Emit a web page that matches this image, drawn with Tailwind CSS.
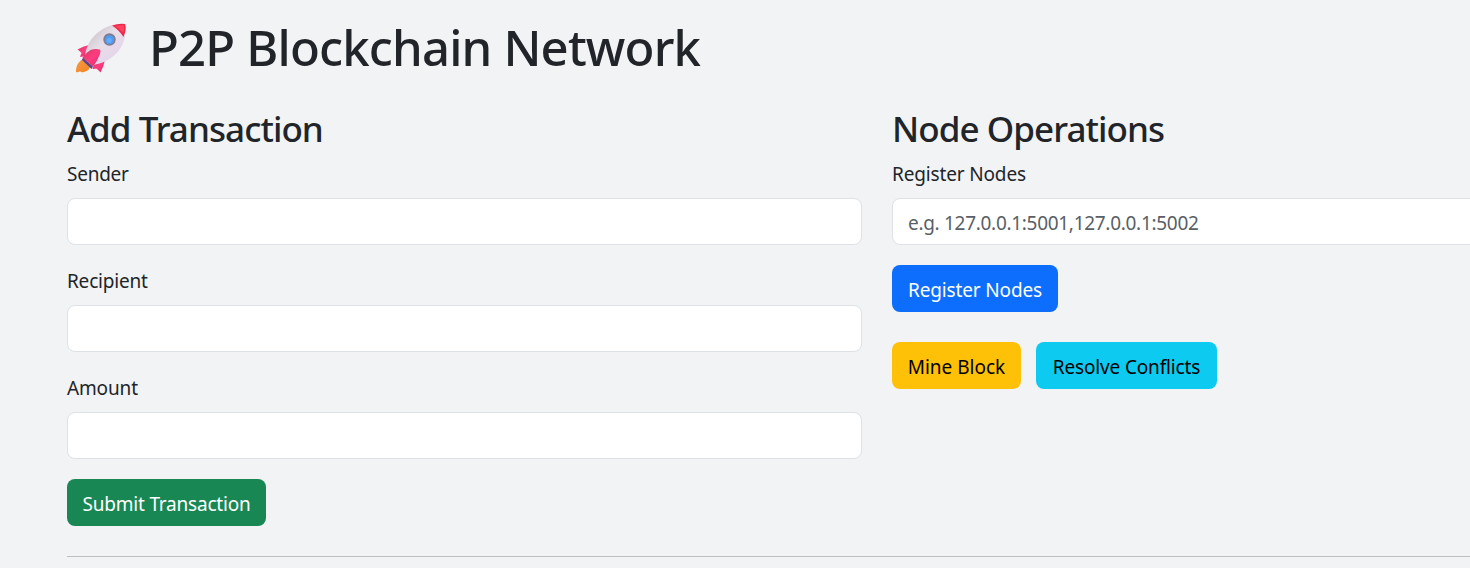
<!DOCTYPE html>
<html lang="en">
<head>
<meta charset="utf-8">
<title>P2P Blockchain Network</title>
<script src="https://cdn.jsdelivr.net/npm/@tailwindcss/browser@4"></script>
</head>
<body class="h-[568px] overflow-hidden bg-[#f1f3f5] font-['Noto_Sans',sans-serif] text-[19px] leading-[30px] tracking-[-0.15px] text-[#212529]">
<main class="ml-[67px] w-[1620px] pt-[18px]">
  <h1 class="flex h-[60px] items-center text-[49px] leading-[60px] font-medium tracking-[-0.82px]">
    <svg class="ml-2 mr-[21px] h-[51px] w-[53px] shrink-0" viewBox="0 0 53 51" aria-hidden="true">
      <defs>
        <linearGradient id="body" x1="0" y1="0" x2="1" y2="1"><stop offset="0.1" stop-color="#c9bfc7"/><stop offset=".45" stop-color="#e6dfe7"/><stop offset="1" stop-color="#e6cdef"/></linearGradient>
        <linearGradient id="fin" x1="0" y1="0" x2="1" y2="1"><stop offset="0" stop-color="#c93a62"/><stop offset=".5" stop-color="#ff3d80"/><stop offset="1" stop-color="#d92a6c"/></linearGradient>
        <linearGradient id="flame" x1="0" y1="0" x2="1" y2="1"><stop offset="0" stop-color="#f29a45"/><stop offset="1" stop-color="#f78423"/></linearGradient>
      </defs>
      <path d="M8 36C4 38 1 42 1 49Q3 50 5 48Q6 50 9 49C13 48 15 46 15 43Z" fill="url(#flame)"/>
      <path d="M14 22Q8 23 2.5 26.5Q5 28 6.5 30Q5.500 32 5 34L12 33Z" fill="url(#fin)"/>
      <path d="M30 36.500Q29 43 25.500 49.500Q23 46.500 21 45.500Q19 46 17.500 46L20 38Z" fill="url(#fin)"/>
      <path d="M8 34.500L18 43.500L16.500 46L7 37Z" fill="#584789"/>
      <path d="M10 33C11 20 21 7 37 2L50 13C48 27 36 39 18 42Z" fill="url(#body)"/>
      <path d="M37 2.500Q44 0 50 1Q52 6 48.500 14Q44 7 37 2.500Z" fill="#ed2849"/>
      <path d="M40 3Q46 2 49 2Q50 6 48 10Q45 6 40 3Z" fill="#ff4260"/>
      <path d="M7.500 34.500Q10.500 30 15.500 27Q20 25.500 25 26.500Q26 28 25 31Q22.500 38 18 43.500Z" fill="url(#fin)"/>
      <circle cx="34.5" cy="16.5" r="6.200" fill="#807c90"/><circle cx="34.5" cy="16.7" r="4.500" fill="#4e9cf5"/><circle cx="34.2" cy="17.5" r="2.5" fill="#63adff"/>
    </svg>
    <span class="relative -top-px whitespace-nowrap">P2P Blockchain Network</span>
  </h1>
  <div class="mt-[30px] grid grid-cols-2 gap-x-[30px]">
    <form>
      <h2 class="h-[42px] text-[35px] leading-[42px] font-medium tracking-[-0.93px]">Add Transaction</h2>
      <label class="mt-[9px] block h-[30px] tracking-[-0.25px]" for="sender">Sender</label>
      <input id="sender" class="mt-[9px] block h-[47px] w-full rounded-[8px] border border-[#dee2e6] bg-white px-[15px]">
      <label class="mt-[21px] block h-[30px] tracking-[-0.2px]" for="recipient">Recipient</label>
      <input id="recipient" class="mt-[9px] block h-[47px] w-full rounded-[8px] border border-[#dee2e6] bg-white px-[15px]">
      <label class="mt-[21px] block h-[30px]" for="amount">Amount</label>
      <input id="amount" class="mt-[9px] block h-[47px] w-full rounded-[8px] border border-[#dee2e6] bg-white px-[15px]">
      <button type="button" class="mt-5 flex h-[47px] w-[199px] items-center justify-center rounded-[8px] bg-[#198754] pt-[3px] whitespace-nowrap text-white tracking-[-0.2px]">Submit Transaction</button>
    </form>
    <section>
      <h2 class="h-[42px] text-[35px] leading-[42px] font-medium tracking-[-0.93px]">Node Operations</h2>
      <label class="mt-[9px] block h-[30px]" for="nodes">Register Nodes</label>
      <input id="nodes" placeholder="e.g. 127.0.0.1:5001,127.0.0.1:5002" class="mt-[9px] block h-[47px] w-full rounded-[8px] border border-[#dee2e6] bg-white px-[15px] pt-[3px] tracking-[-0.3px] placeholder:text-[#595f66]">
      <button type="button" class="mt-5 flex h-[47px] w-[166px] items-center justify-center rounded-[8px] bg-[#0d6efd] pt-[3px] whitespace-nowrap text-white">Register Nodes</button>
      <div class="mt-[30px] flex gap-[15px]">
        <button type="button" class="flex h-[47px] w-[129px] items-center justify-center rounded-[8px] bg-[#ffc107] pt-[3px] whitespace-nowrap text-black tracking-normal">Mine Block</button>
        <button type="button" class="flex h-[47px] w-[181px] items-center justify-center rounded-[8px] bg-[#0dcaf0] pt-[3px] whitespace-nowrap text-black">Resolve Conflicts</button>
      </div>
    </section>
  </div>
  <hr class="mt-[30px] border-t border-[#bdbfc1]">
</main>
</body>
</html>
